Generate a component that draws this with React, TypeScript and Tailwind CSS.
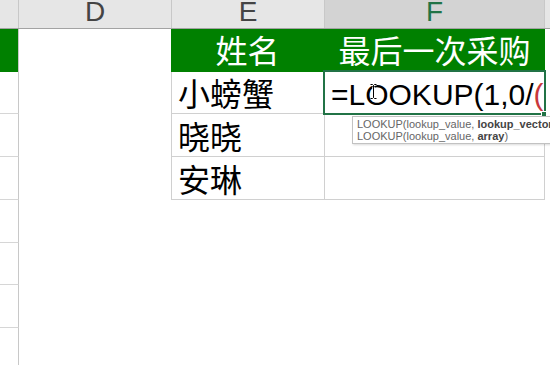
import React from "react";

const font = "font-['Liberation_Sans','Noto_Sans_CJK_SC',sans-serif]";

type RowProps = { h: string; kind: "green" | "data" | "empty"; e?: string; f?: React.ReactNode };

function Row({ h, kind, e, f }: RowProps) {
  if (kind === "green") {
    return (
      <div className={`flex ${h}`}>
        <div className="w-[19px] shrink-0 bg-[#008000] border-r border-[#c8c8c8]" />
        <div className="w-[152px] shrink-0 bg-white" />
        <div className="w-[153px] shrink-0 bg-[#008000] flex items-center justify-center pt-[3px] text-white text-[32px] leading-none">
          {e}
        </div>
        <div className="w-[221px] shrink-0 bg-[#008000] flex items-center justify-center pt-[3px] text-white text-[32px] leading-none">
          {f}
        </div>
        <div className="flex-1 bg-white" />
      </div>
    );
  }
  if (kind === "data") {
    return (
      <div className={`flex ${h}`}>
        <div className="w-[19px] shrink-0 border-r border-b border-r-[#c8c8c8] border-b-[#d6d6d6]" />
        <div className="w-[153px] shrink-0 bg-white border-r border-[#d0d0d0]" />
        <div className="w-[153px] shrink-0 border-r border-b border-[#d0d0d0] flex items-center pl-[6px] pt-[5px] text-[32px] leading-none text-black whitespace-nowrap overflow-hidden">
          {e}
        </div>
        <div className="w-[220px] shrink-0 border-r border-b border-[#d0d0d0] flex items-center pl-[6px] pt-[5px] text-[30px] leading-none text-black whitespace-nowrap overflow-hidden">
          {f}
        </div>
        <div className="flex-1 bg-white" />
      </div>
    );
  }
  return (
    <div className={`flex ${h}`}>
      <div className="w-[19px] shrink-0 border-r border-b border-r-[#c8c8c8] border-b-[#d6d6d6]" />
      <div className="flex-1 bg-white" />
    </div>
  );
}

export default function App() {
  return (
    <div className={`relative w-[550px] h-[365px] overflow-hidden bg-white ${font}`}>
      {/* Column headers */}
      <div className="flex h-[29px] bg-[#e6e6e6] border-b border-[#a3a3a3]">
        <div className="w-[19px] shrink-0 border-r border-[#c8c8c8]" />
        <div className="w-[153px] shrink-0 border-r border-[#c8c8c8] flex items-center justify-center pb-[5px] text-[28px] leading-none text-[#444444]">
          D
        </div>
        <div className="w-[153px] shrink-0 border-r border-[#c8c8c8] flex items-center justify-center pb-[5px] text-[28px] leading-none text-[#444444]">
          E
        </div>
        <div className="w-[220px] shrink-0 bg-[#d3d3d3] border-r border-[#c8c8c8] flex items-center justify-center pb-[5px] text-[28px] leading-none text-[#217346]">
          F
        </div>
        <div className="flex-1" />
      </div>

      <Row h="h-[43px]" kind="green" e="姓名" f="最后一次采购" />
      <Row
        h="h-[42px]"
        kind="data"
        e="小螃蟹"
        f={
          <span>
            =LOOKUP(1,0/<span className="text-[#c8383c]">(</span>
          </span>
        }
      />
      <Row h="h-[43px]" kind="data" e="晓晓" />
      <Row h="h-[43px]" kind="data" e="安琳" />
      <Row h="h-[43px]" kind="empty" />
      <Row h="h-[42px]" kind="empty" />
      <Row h="h-[43px]" kind="empty" />
      <Row h="h-[43px]" kind="empty" />

      {/* Active cell selection */}
      <div className="absolute left-[323px] top-[70px] w-[223px] h-[45px] border-2 border-[#217346]" />
      <div className="absolute left-[541px] top-[111px] w-[6px] h-[6px] bg-[#217346] border border-white" />

      {/* Text cursor I-beam */}
      <svg className="absolute left-[369px] top-[83px]" width="9" height="17" viewBox="0 0 9 17">
        <path d="M1.5 1.5h2l1 1 1-1h2M4.5 2.5v12M1.5 15.5h2l1-1 1 1h2" stroke="#ffffff" strokeWidth="2.5" fill="none" />
        <path d="M1.5 1.5h2l1 1 1-1h2M4.5 2.5v12M1.5 15.5h2l1-1 1 1h2" stroke="#000000" strokeWidth="1" fill="none" />
      </svg>

      {/* Function tooltip */}
      <div className="absolute left-[352px] top-[116px] h-[28px] w-[260px] bg-white border border-[#c2c2c2] shadow-[1px_1px_2px_rgba(0,0,0,0.15)] pl-[4px] pt-[1px] text-[11px] leading-[12px] text-[#666666] whitespace-nowrap font-['Liberation_Sans',sans-serif]">
        <div>
          LOOKUP(lookup_value, <span className="font-bold text-[#444444]">lookup_vector</span>, [result_vector])
        </div>
        <div>
          LOOKUP(lookup_value, <span className="font-bold text-[#444444]">array</span>)
        </div>
      </div>
    </div>
  );
}
